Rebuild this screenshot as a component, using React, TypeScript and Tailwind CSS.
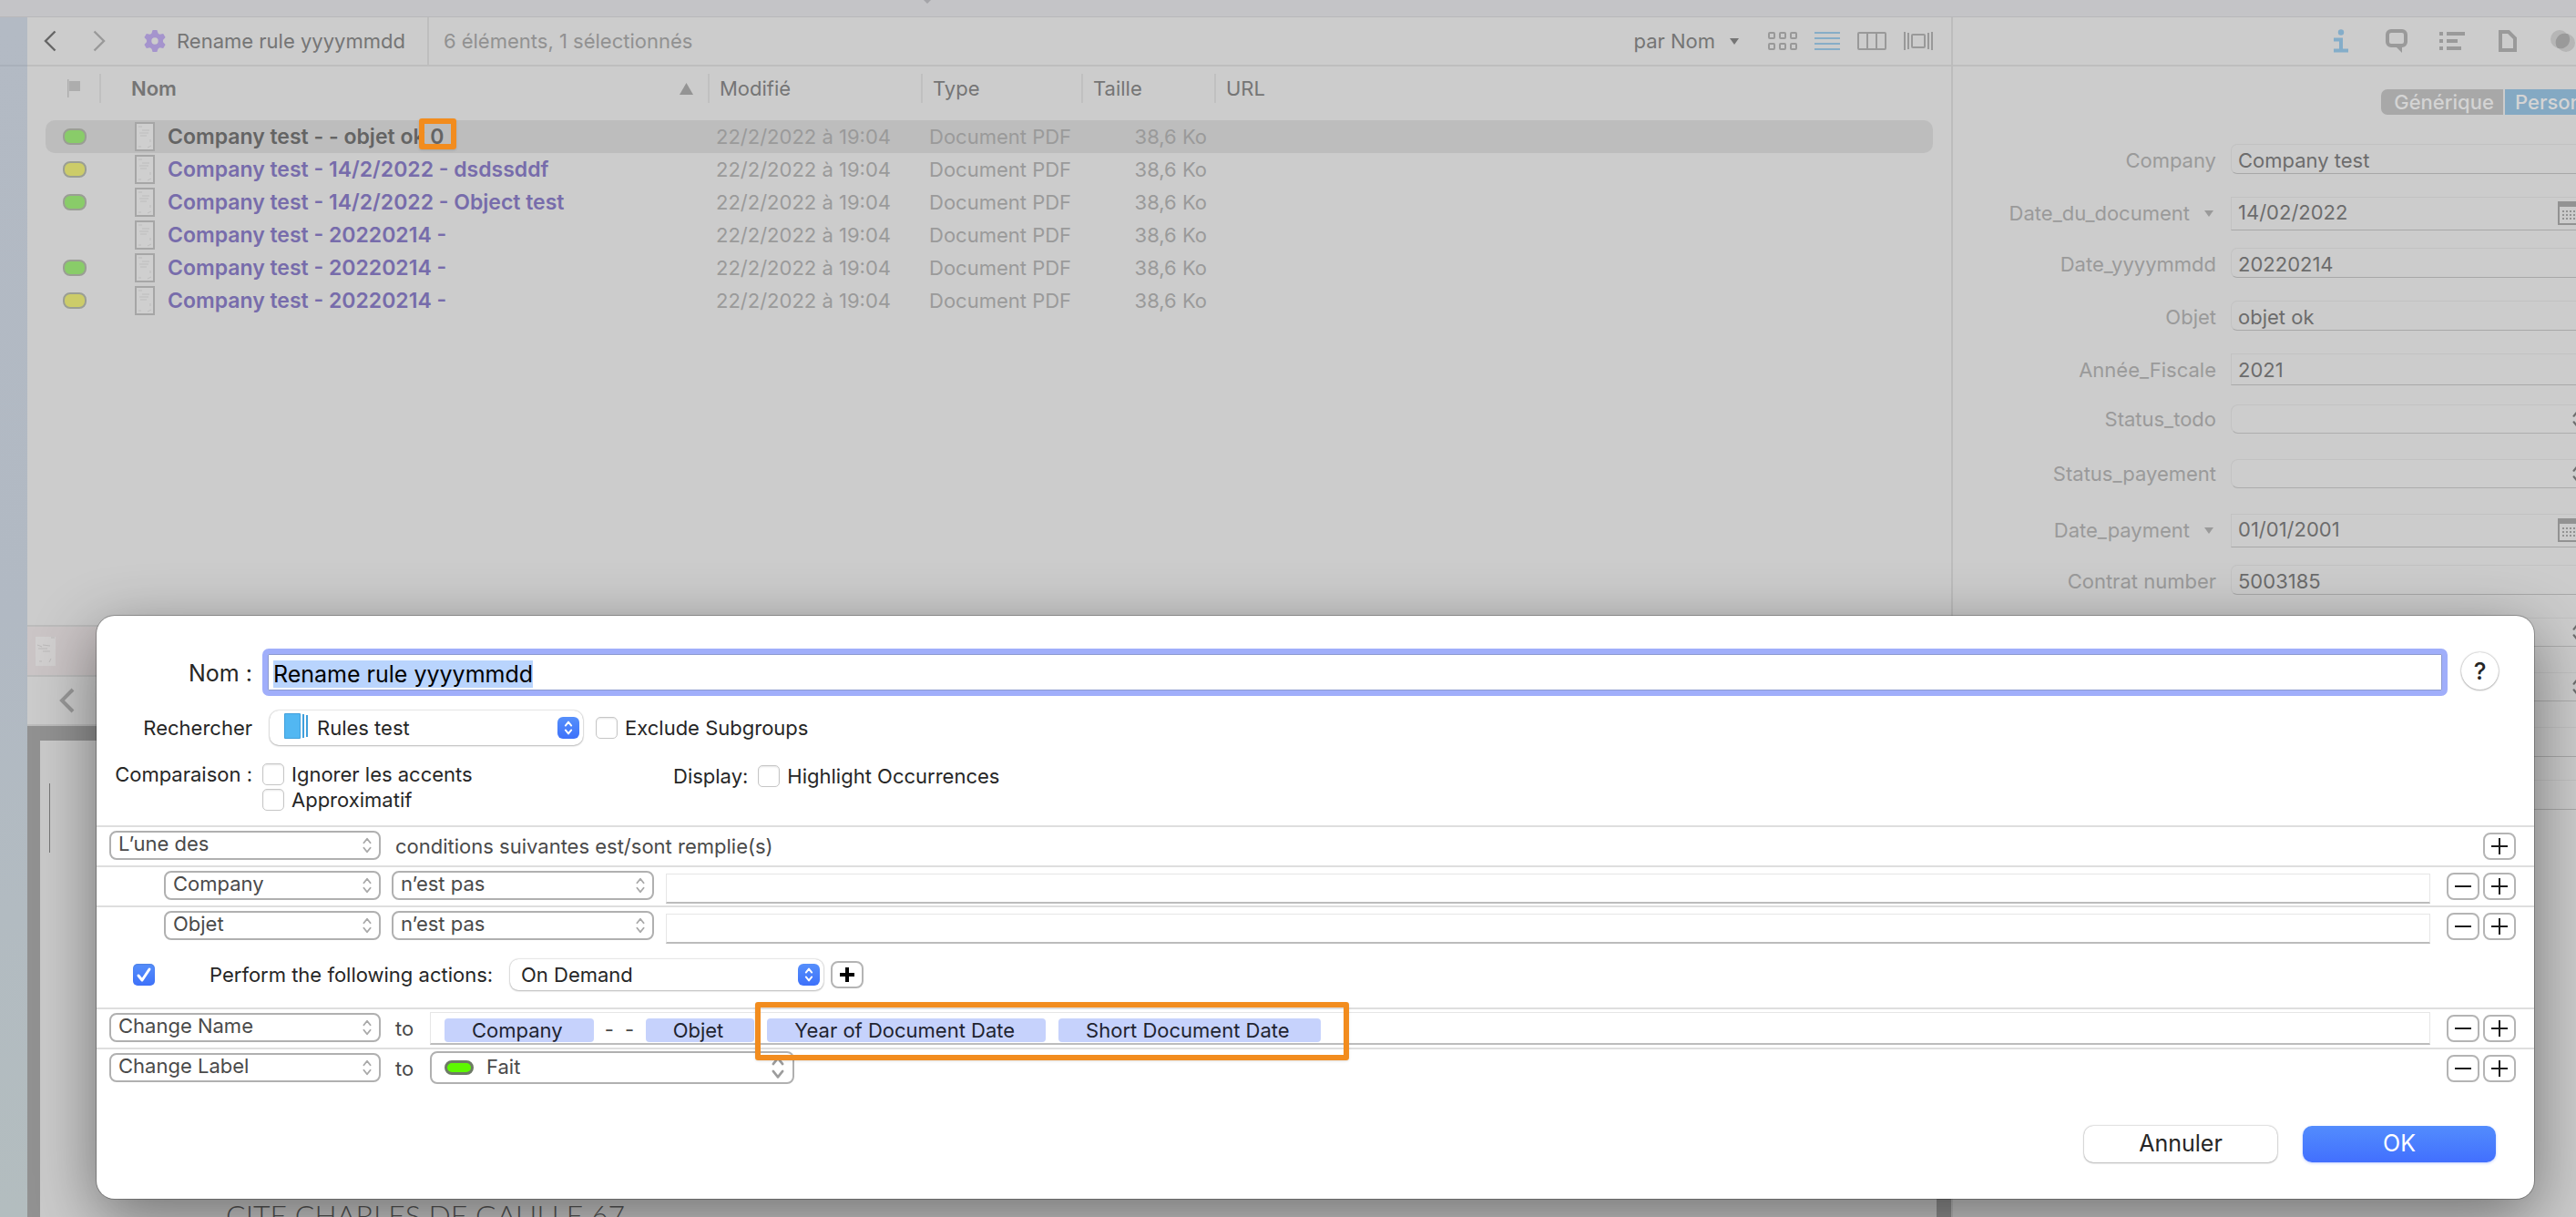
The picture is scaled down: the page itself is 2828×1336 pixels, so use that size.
import type { ReactNode } from "react";
import clsx from "clsx";

type Label = "green" | "yellow" | null;

const documents: { name: string; label: Label; flagged?: string; selected?: boolean }[] = [
  { name: "Company test - - objet ok", label: "green", flagged: "0", selected: true },
  { name: "Company test - 14/2/2022 - dsdssddf", label: "yellow" },
  { name: "Company test - 14/2/2022 - Object test", label: "green" },
  { name: "Company test - 20220214 -", label: null },
  { name: "Company test - 20220214 -", label: "green" },
  { name: "Company test - 20220214 -", label: "yellow" },
];

type Kind = "text" | "date" | "number" | "select";

const metadata: { id: string; label: string; value: string; kind: Kind }[] = [
  { id: "company", label: "Company", value: "Company test", kind: "text" },
  { id: "docdate", label: "Date_du_document", value: "14/02/2022", kind: "date" },
  { id: "yyyymmdd", label: "Date_yyyymmdd", value: "20220214", kind: "text" },
  { id: "objet", label: "Objet", value: "objet ok", kind: "text" },
  { id: "fiscale", label: "Année_Fiscale", value: "2021", kind: "number" },
  { id: "todo", label: "Status_todo", value: "", kind: "select" },
  { id: "payement", label: "Status_payement", value: "", kind: "select" },
  { id: "paydate", label: "Date_payment", value: "01/01/2001", kind: "date" },
  { id: "contrat", label: "Contrat number", value: "5003185", kind: "text" },
  { id: "extra1", label: "", value: "", kind: "select" },
  { id: "extra2", label: "", value: "", kind: "select" },
  { id: "extra3", label: "", value: "", kind: "text" },
  { id: "extra4", label: "", value: "", kind: "text" },
];

function Triangle({ className }: { className?: string }) {
  return (
    <svg viewBox="0 0 10 7" className={clsx("h-[7px] w-[10px] shrink-0", className)} fill="currentColor">
      <path d="M0 0h10L5 7z" />
    </svg>
  );
}

function UpDown({ className, stroke = 2 }: { className?: string; stroke?: number }) {
  return (
    <svg viewBox="0 0 12 20" className={className} fill="none" stroke="currentColor" strokeWidth={stroke} strokeLinecap="round" strokeLinejoin="round">
      <path d="M2 7l4-5 4 5M2 13l4 5 4-5" />
    </svg>
  );
}

function GearIcon() {
  return (
    <svg viewBox="0 0 24 24" className="h-6 w-6 text-[#a594cd]" fill="none" stroke="currentColor">
      <circle cx="12" cy="12" r="6.4" strokeWidth="5.4" />
      {[0, 60, 120, 180, 240, 300].map((a) => (
        <path key={a} d="M8 5L9.600 0h4.800L16 5z" fill="currentColor" stroke="none" transform={`rotate(${a} 12 12)`} />
      ))}
    </svg>
  );
}

function PageThumb() {
  return (
    <svg viewBox="0 0 22 32" className="h-8 w-[22px]" fill="none">
      <rect x="1" y="1" width="20" height="30" fill="#cfcfcf" stroke="#a6a6a6" strokeWidth="2" />
      <path d="M4 5h4M8 9h8M5 12h10M6 15h7M17 19v3M4 27h3M14 28l4-2" stroke="#bdbdbd" />
    </svg>
  );
}

function Toolbar() {
  return (
    <div className="flex h-[54px] shrink-0 items-center border-b-2 border-[#bebebe] text-[22px] text-[#757575]">
      <button aria-label="Précédent" className="ml-[18px] text-[#666]">
        <svg viewBox="0 0 14 24" className="h-6 w-[14px]" fill="none" stroke="currentColor" strokeWidth="2.4">
          <path d="M12.500 1.500L2 12l10.500 10.500" />
        </svg>
      </button>
      <button aria-label="Suivant" className="ml-10 text-[#999]">
        <svg viewBox="0 0 14 24" className="h-6 w-[14px]" fill="none" stroke="currentColor" strokeWidth="2.4">
          <path d="M1.500 1.500L12 12 1.500 22.500" />
        </svg>
      </button>
      <span className="ml-[42px]">
        <GearIcon />
      </span>
      <span className="ml-3">Rename rule yyyymmdd</span>
      <span className="ml-6 self-stretch border-l-2 border-[#bebebe]" />
      <span className="ml-4 text-[#919191]">6 éléments, 1 sélectionnés</span>
      <div className="ml-auto flex items-center pr-5 text-[#999]">
        <button className="mr-8 flex items-center gap-4 text-[#757575]">
          par Nom
          <Triangle />
        </button>
        <div className="flex items-center gap-[19px]">
          <button aria-label="Icônes">
            <svg viewBox="0 0 32 20" className="h-5 w-8" fill="none" stroke="currentColor" strokeWidth="2">
              {[1, 13, 25].map((x) => (
                <g key={x}>
                  <rect x={x} y="1" width="6" height="6" rx="1" />
                  <rect x={x} y="13" width="6" height="6" rx="1" />
                </g>
              ))}
            </svg>
          </button>
          <button aria-label="Liste" className="text-[#86adc7]">
            <svg viewBox="0 0 28 20" className="h-5 w-7" stroke="currentColor" strokeWidth="2">
              <path d="M0 1h28M0 7h28M0 13h28M0 19h28" />
            </svg>
          </button>
          <button aria-label="Colonnes">
            <svg viewBox="0 0 32 20" className="h-5 w-8" fill="none" stroke="currentColor" strokeWidth="2">
              <rect x="1" y="1" width="30" height="18" rx="1" />
              <path d="M11 1v18M21 1v18" />
            </svg>
          </button>
          <button aria-label="Galerie">
            <svg viewBox="0 0 32 20" className="h-5 w-8" fill="none" stroke="currentColor" strokeWidth="2">
              <rect x="9" y="3" width="14" height="14" rx="1" />
              <path d="M1 0v20M5 1v18M27 1v18M31 0v20" />
            </svg>
          </button>
        </div>
      </div>
    </div>
  );
}

function HeaderCell({ children, width }: { children: ReactNode; width?: string }) {
  return (
    <th className={clsx("pt-2 pb-[19px] font-normal", width)}>
      <div className="h-8 border-l-2 border-[#c0c0c0] pl-[11px] leading-8">{children}</div>
    </th>
  );
}

function DocumentTable() {
  return (
    <table className="w-full table-fixed border-separate border-spacing-0 text-left text-[22px]">
      <thead className="text-[#757575]">
        <tr>
          <th className="w-[59px] pt-2 pb-[19px] pl-6">
            <svg viewBox="0 0 14 20" className="h-5 w-[14px] text-[#adadad]" fill="currentColor">
              <path d="M0 0h1.500v20H0zM2 2h12v11H2z" />
            </svg>
          </th>
          <th className="w-[668px] pt-2 pb-[19px] font-semibold">
            <div className="flex h-8 items-center border-l-2 border-[#c0c0c0] pr-4 pl-[33px] leading-8">
              Nom
              <svg viewBox="0 0 15 13" className="ml-auto h-[13px] w-[15px] text-[#949494]" fill="currentColor">
                <path d="M7.500 0L15 13H0z" />
              </svg>
            </div>
          </th>
          <HeaderCell width="w-[234px]">Modifié</HeaderCell>
          <HeaderCell width="w-[176px]">Type</HeaderCell>
          <HeaderCell width="w-[146px]">Taille</HeaderCell>
          <HeaderCell>URL</HeaderCell>
        </tr>
      </thead>
      <tbody className="text-[#9a9a9a]">
        {documents.map((d, i) => (
          <tr key={i} className={clsx("h-9", d.selected && "[&>td]:bg-[#bdbdbd] [&>td:first-child]:rounded-l-[10px] [&>td:last-child]:rounded-r-[10px]")}>
            <td className="p-0 pl-[19px]">
              {d.label && (
                <div
                  className={clsx(
                    "h-[18px] w-[26px] rounded-[8px] border-2 border-[#9a9e94]",
                    d.label === "green" ? "bg-[#89cc69]" : "bg-[#cccc69]",
                  )}
                />
              )}
            </td>
            <td className="p-0">
              <div className={clsx("flex h-9 items-center pl-[39px] text-[23px] font-semibold whitespace-pre", d.selected ? "text-[#646464]" : "text-[#776cab]")}>
                <PageThumb />
                <span className="ml-[14px]">
                  {d.name}
                  {d.flagged && (
                    <>
                      {" "}
                      <span className="relative inline-block leading-[26px]">
                        {d.flagged}
                        <span className="absolute -top-[7px] -right-[14px] -bottom-px -left-3 rounded-[3px] border-6 border-[#f28c1e] shadow-sm" />
                      </span>
                    </>
                  )}
                </span>
              </div>
            </td>
            <td className="p-0 pl-[9px]">22/2/2022 à 19:04</td>
            <td className="p-0 pl-[9px]">Document PDF</td>
            <td className="p-0 pr-2 text-right">38,6 Ko</td>
            <td className="p-0" />
          </tr>
        ))}
      </tbody>
    </table>
  );
}

function Preview() {
  return (
    <div className="flex min-h-0 flex-1 flex-col border-t-2 border-[#bcbcbc]">
      <div className="flex h-[53px] shrink-0 items-center bg-[#cbc5c6] pl-[9px]">
        <svg viewBox="0 0 22 32" className="h-8 w-[22px]">
          <rect width="22" height="32" fill="#d2d0d0" />
          <path d="M2 9l5 2M8 9l8 1M3 13h10M8 16h8M4 27h3M15 28l2-4M17 1h4" stroke="#bcbaba" />
        </svg>
      </div>
      <div className="flex h-[56px] shrink-0 items-center border-y-2 border-[#bcbcbc] pl-[35px]">
        <button aria-label="Page précédente" className="text-[#999]">
          <svg viewBox="0 0 18 28" className="h-7 w-[18px]" fill="none" stroke="currentColor" strokeWidth="4">
            <path d="M15 2L3 14l12 12" />
          </svg>
        </button>
      </div>
      <div className="flex min-h-0 flex-1 bg-[#929292] pt-4 pr-4 pl-[14px]">
        <div className="flex-1 overflow-hidden bg-[#cbcbcb] pt-[47px]">
          <div className="ml-[10px] h-[76px] w-px bg-[#777]" />
          <p className="mt-[378px] ml-[204px] font-['Lato'] text-[32px] leading-10 font-light whitespace-nowrap text-[#555]">CITE CHARLES DE GAULLE 67</p>
        </div>
      </div>
    </div>
  );
}

function CalendarIcon() {
  return (
    <svg viewBox="0 0 26 26" className="absolute top-[5px] right-[15px] h-[26px] w-[26px] text-[#929292]" fill="none" stroke="currentColor">
      <rect x="1" y="1" width="24" height="24" strokeWidth="2" />
      <path d="M0 3h26" strokeWidth="6" />
      <path d="M5 11h16M5 15h16M5 19h16" strokeWidth="2" strokeDasharray="2 2" />
    </svg>
  );
}

function MetadataRow({ id, label, value, kind }: (typeof metadata)[number]) {
  return (
    <div className={clsx("flex", kind === "text" && "h-[58px]", (kind === "date" || kind === "number") && "h-[56px]", kind === "select" && "h-[60px]")}>
      <label
        htmlFor={id}
        className={clsx("mr-4 flex w-[289px] shrink-0 items-center justify-end gap-4 text-[#9a9a9a]", kind === "select" ? "h-8" : "h-9")}
      >
        {label}
        {kind === "date" && <Triangle className="mr-[3px]" />}
      </label>
      <div className="relative w-[400px] shrink-0 self-start">
        {kind === "select" ? (
          <>
            <select id={id} aria-label={label || "Champ"} className="block h-8 w-full appearance-none rounded-[8px] border border-[#c2c2c2] border-b-[#adadad] bg-[#cfcfcf]/40" />
            <UpDown className="absolute top-[5px] right-[11px] h-[22px] w-4 text-[#6f6f6f]" />
          </>
        ) : (
          <input
            id={id}
            aria-label={label || "Champ"}
            defaultValue={value}
            className={clsx(
              "block w-full border border-[#c2c2c2] border-b-[#a8a8a8] pl-[7px] text-[#6c6c6c]",
              kind === "text" && "h-[33px] rounded-[7px] pt-1",
              kind === "date" && "h-[37px] pb-1",
              kind === "number" && "h-[35px]",
            )}
          />
        )}
        {kind === "date" && <CalendarIcon />}
      </div>
    </div>
  );
}

function Inspector() {
  return (
    <aside className="w-[686px] shrink-0 overflow-hidden border-l-2 border-[#bcbcbc] text-[22px]">
      <div className="flex h-[54px] items-center border-b-2 border-[#bebebe] pl-[395px] text-[#9a9a9a] [&>button]:flex [&>button]:w-[61px] [&>button]:shrink-0 [&>button]:justify-center">
        <button aria-label="Infos" className="text-[#84adc9]">
          <svg viewBox="0 0 16 26" className="h-[26px] w-4" fill="currentColor">
            <circle cx="8" cy="3.500" r="3.200" />
            <path d="M0 9.500h10v12h6v4H0v-4h6v-8H0z" />
          </svg>
        </button>
        <button aria-label="Annotations">
          <svg viewBox="0 0 24 26" className="h-[26px] w-6" fill="none" stroke="currentColor" strokeWidth="4">
            <rect x="2" y="2" width="20" height="16" rx="4" />
            <path d="M11 19h7v7z" fill="currentColor" stroke="none" />
          </svg>
        </button>
        <button aria-label="Table des matières">
          <svg viewBox="0 0 28 20" className="h-5 w-7" fill="currentColor">
            <path d="M0 0h4v4H0zM8 0h20v4H8zM0 8h4v4H0zM8 8h12v4H8zM0 16h4v4H0zM8 16h16v4H8z" />
          </svg>
        </button>
        <button aria-label="Document">
          <svg viewBox="0 0 20 24" className="h-6 w-5" fill="none" stroke="currentColor" strokeWidth="4">
            <path d="M2 2h9l7 7v13H2z" />
          </svg>
        </button>
        <button aria-label="Voir aussi">
          <svg viewBox="0 0 28 26" className="h-[26px] w-7">
            <circle cx="10" cy="11" r="10" fill="#b6b6b6" />
            <circle cx="17" cy="15" r="10" fill="#b6b6b6" />
            <path d="M19.200 5.300A10 10 0 0 0 7.700 20.700 10 10 0 0 0 19.200 5.300z" fill="#9a9a9a" />
          </svg>
        </button>
      </div>
      <div className="mt-[25px] mb-8 flex pl-[470px] leading-7 font-medium text-[#d4d4d4]">
        <button className="h-7 w-[134px] shrink-0 rounded-l-[7px] bg-[#a8a8a8] pl-1">Générique</button>
        <button className="ml-[2px] h-7 w-[160px] shrink-0 bg-[#84a9c3] pl-[11px] text-left">Personnalisé</button>
      </div>
      {metadata.map((m) => (
        <MetadataRow key={m.id} {...m} />
      ))}
    </aside>
  );
}

function BlueHandle() {
  return (
    <span className="pointer-events-none absolute top-1/2 right-1 flex h-6 w-6 -translate-y-1/2 items-center justify-center rounded-[6px] bg-linear-to-b from-[#568ffb] to-[#3e71fa] text-white">
      <UpDown className="h-4 w-[10px]" stroke={2.4} />
    </span>
  );
}

function MenuSelect({ label, value, className }: { label: string; value: string; className: string }) {
  return (
    <span className={clsx("relative mb-[2px] block shrink-0", className)}>
      <select aria-label={label} className="block h-8 w-full appearance-none rounded-[8px] border-2 border-[#b0b0b0] bg-white pb-[3px] pl-2 leading-[25px] text-[#4a4a4a]">
        <option>{value}</option>
      </select>
      <UpDown className="pointer-events-none absolute top-[7px] right-[9px] h-[18px] w-3 text-[#a8a8a8]" />
    </span>
  );
}

function Checkbox({ id, checked }: { id: string; checked?: boolean }) {
  return (
    <span className="relative block h-6 w-6 shrink-0">
      <input
        type="checkbox"
        id={id}
        defaultChecked={checked}
        className="block h-6 w-6 appearance-none rounded-[5px] border border-[#c6c6c6] bg-white shadow-[inset_0_1px_2px_#0000001a] checked:border-0 checked:bg-linear-to-b checked:from-[#568ffb] checked:to-[#3e71fa]"
      />
      {checked && (
        <svg viewBox="0 0 24 24" className="pointer-events-none absolute inset-0" fill="none" stroke="#fff" strokeWidth="3" strokeLinecap="round" strokeLinejoin="round">
          <path d="M6 13l4 5 8-12" />
        </svg>
      )}
    </span>
  );
}

function RowButtons({ minus = true }: { minus?: boolean }) {
  const cls = "flex h-[30px] w-9 items-center justify-center rounded-[8px] border-2 border-[#b4b4b4] bg-white text-[#1c1c1c]";
  return (
    <div className="ml-auto flex shrink-0 gap-1">
      {minus && (
        <button aria-label="Retirer" className={cls}>
          <svg viewBox="0 0 18 18" className="h-[18px] w-[18px]" stroke="currentColor" strokeWidth="2">
            <path d="M0 9h18" />
          </svg>
        </button>
      )}
      <button aria-label="Ajouter" className={cls}>
        <svg viewBox="0 0 18 18" className="h-[18px] w-[18px]" stroke="currentColor" strokeWidth="2">
          <path d="M0 9h18M9 0v18" />
        </svg>
      </button>
    </div>
  );
}

function RuleRow({ children }: { children: ReactNode }) {
  return <div className="flex h-11 items-center border-t-2 border-[#dedede] pr-5 pl-[14px] text-[#4a4a4a]">{children}</div>;
}

function Token({ children }: { children: ReactNode }) {
  return <span className="h-[26px] rounded-[4px] bg-[#c6d2fc] pr-[34px] pl-[30px] leading-[26px] whitespace-nowrap text-[#1f2430]">{children}</span>;
}

function RuleDialog() {
  return (
    <div
      role="dialog"
      aria-label="Rename rule"
      className="absolute top-[676px] right-[46px] left-[106px] rounded-[20px] bg-white pb-10 text-[22px] text-[#262626] shadow-[0_0_0_1px_#00000040,0_20px_70px_#00000073]"
    >
      <div className="flex items-center pt-9 pr-[39px]">
        <label htmlFor="rule-name" className="w-[171px] pt-1 text-right text-[25px]">
          Nom :
        </label>
        <input
          id="rule-name"
          defaultValue="Rename rule yyyymmdd"
          autoFocus
          onFocus={(e) => e.currentTarget.select()}
          className="ml-[11px] h-[52px] min-w-0 flex-1 rounded-[7px] border-6 border-[#a0aefa] px-[6px] pt-1 text-[25px] leading-[34px] text-black shadow-[inset_0_0_0_1px_#8c9ad0] outline-none selection:bg-[#b9d4fd] selection:text-black"
        />
        <button aria-label="Aide" className="mb-[3px] ml-[15px] flex h-[41px] w-[41px] items-center justify-center rounded-full bg-white text-[26px] font-medium shadow-[0_0_2px_#0006,0_1px_2px_#0003]">
          ?
        </button>
      </div>

      <div className="mt-4 flex items-center">
        <label htmlFor="scope" className="w-[171px] text-right">
          Rechercher
        </label>
        <span className="relative ml-[19px] block w-[344px]">
          <select id="scope" className="block h-[38px] w-full appearance-none rounded-[10px] bg-white pl-[52px] shadow-[0_0_2px_#0005,0_1px_2px_#0003]">
            <option>Rules test</option>
          </select>
          <svg viewBox="0 0 26 28" className="pointer-events-none absolute top-[3px] left-4 h-7 w-[26px] text-[#3f9fdc]" fill="currentColor">
            <rect width="18" height="28" rx="1" />
            <rect x="1" y="1" width="16" height="26" fill="#52b7f2" />
            <path d="M20 1h2v26h-2zM24 2h2v24h-2z" />
          </svg>
          <BlueHandle />
        </span>
        <span className="ml-[14px]">
          <Checkbox id="subgroups" />
        </span>
        <label htmlFor="subgroups" className="ml-2">
          Exclude Subgroups
        </label>
      </div>

      <div className="mt-5 flex leading-6">
        <span className="w-[171px] text-right">Comparaison :</span>
        <div className="ml-[11px] flex w-[451px] flex-col gap-1">
          <div className="flex gap-2">
            <Checkbox id="accents" />
            <label htmlFor="accents">Ignorer les accents</label>
          </div>
          <div className="flex gap-2">
            <Checkbox id="fuzzy" />
            <label htmlFor="fuzzy">Approximatif</label>
          </div>
        </div>
        <div className="flex gap-2 pt-[2px]">
          <span className="mr-[3px]">Display:</span>
          <Checkbox id="highlight" />
          <label htmlFor="highlight">Highlight Occurrences</label>
        </div>
      </div>

      <div className="mt-4">
        <RuleRow>
          <MenuSelect label="Opérateur" value="L’une des" className="w-[298px]" />
          <span className="ml-4">conditions suivantes est/sont remplie(s)</span>
          <RowButtons minus={false} />
        </RuleRow>
        {["Company", "Objet"].map((field) => (
          <RuleRow key={field}>
            <MenuSelect label="Champ" value={field} className="ml-[60px] w-[238px]" />
            <MenuSelect label="Comparateur" value="n’est pas" className="ml-3 w-[288px]" />
            <input aria-label={`Valeur ${field}`} className="mt-1 mr-[18px] ml-[13px] h-[33px] min-w-0 flex-1 border border-b-2 border-[#e6e6e6] border-b-[#bcbcbc] px-2" />
            <RowButtons />
          </RuleRow>
        ))}
      </div>

      <div className="flex h-[68px] items-center pb-1 pl-10">
        <Checkbox id="perform" checked />
        <label htmlFor="perform" className="ml-[60px] w-[314px] whitespace-nowrap">
          Perform the following actions:
        </label>
        <span className="relative ml-4 block w-[344px]">
          <select aria-label="Déclencheur" className="block h-[34px] w-full appearance-none rounded-[9px] bg-white pl-3 shadow-[0_0_2px_#0005,0_1px_2px_#0003]">
            <option>On Demand</option>
          </select>
          <BlueHandle />
        </span>
        <button aria-label="Ajouter une action" className="ml-2 flex h-[30px] w-9 items-center justify-center rounded-[8px] border-2 border-[#b4b4b4] text-black">
          <svg viewBox="0 0 16 16" className="h-4 w-4" stroke="currentColor" strokeWidth="4">
            <path d="M0 8h16M8 0v16" />
          </svg>
        </button>
      </div>

      <RuleRow>
        <MenuSelect label="Action" value="Change Name" className="w-[298px]" />
        <span className="ml-4 w-[38px]">to</span>
        <div className="mr-[18px] flex h-9 flex-1 items-center gap-3 border border-b-2 border-[#e6e6e6] border-b-[#bcbcbc] pt-1 pl-[15px]">
          <Token>Company</Token>
          <span className="w-[33px] whitespace-pre">-  -</span>
          <Token>Objet</Token>
          <div className="relative flex gap-[14px] pl-[2px]">
            <Token>Year of Document Date</Token>
            <Token>Short Document Date</Token>
            <span className="pointer-events-none absolute -top-[18px] -right-[31px] -bottom-5 -left-[11px] z-10 rounded-[3px] border-6 border-[#f28c1e] shadow-sm" />
          </div>
        </div>
        <RowButtons />
      </RuleRow>
      <RuleRow>
        <MenuSelect label="Action" value="Change Label" className="w-[298px]" />
        <span className="ml-4 w-[38px]">to</span>
        <span className="relative mb-[2px] block w-[400px]">
          <select aria-label="Étiquette" className="block h-9 w-full appearance-none rounded-[8px] border-2 border-[#b0b0b0] pb-[3px] pl-[60px] leading-7 text-[#4a4a4a]">
            <option>Fait</option>
          </select>
          <span className="pointer-events-none absolute top-[10px] left-4 h-4 w-8 rounded-[8px] border-[3px] border-[#6e7a66] bg-[#5df900]" />
          <UpDown className="pointer-events-none absolute top-[5px] right-[10px] h-[26px] w-4 text-[#9c9c9c]" />
        </span>
        <RowButtons />
      </RuleRow>

      <div className="mt-[42px] flex justify-end gap-7 pr-[42px] text-[25px]">
        <button className="h-10 w-[212px] rounded-[10px] bg-white shadow-[0_0_2px_#0006,0_1px_2px_#0003]">Annuler</button>
        <button className="h-10 w-[212px] rounded-[10px] bg-linear-to-b from-[#538cfd] to-[#426ffe] text-white shadow-[0_1px_3px_#426ffe55]">OK</button>
      </div>
    </div>
  );
}

export default function App() {
  return (
    <div className="relative flex h-screen flex-col overflow-hidden bg-[#cccccc] font-['Inter','Liberation_Sans',sans-serif]">
      <div className="h-[19px] shrink-0 border-b border-[#b8b8ba] bg-[#c4c4c7] pl-[1014px]">
        <svg viewBox="0 0 8 4" className="h-1 w-2 text-[#a4a4a8]" fill="currentColor">
          <path d="M0 0h8L4 4z" />
        </svg>
      </div>
      <div className="flex min-h-0 flex-1">
        <div className="w-[30px] shrink-0 bg-linear-to-b from-[#b3bac4] via-[#b1b9c3] to-[#b3bdbf]">
          <div className="h-[54px] border-b-2 border-[#a9b0ba]" />
        </div>
        <main className="flex min-w-0 flex-1 flex-col">
          <Toolbar />
          <div className="h-[613px] shrink-0 px-5">
            <DocumentTable />
          </div>
          <Preview />
        </main>
        <Inspector />
      </div>
      <RuleDialog />
    </div>
  );
}
